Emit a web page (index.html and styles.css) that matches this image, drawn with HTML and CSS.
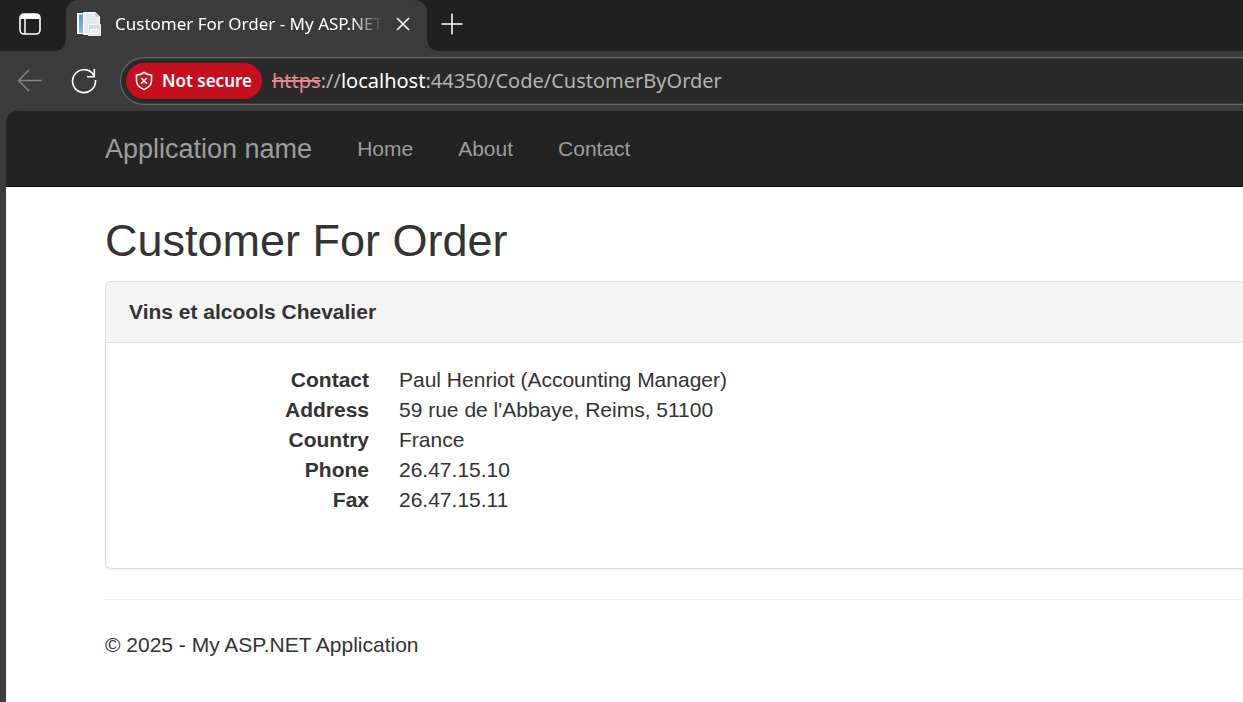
FILE: index.html
```html
<!DOCTYPE html>
<html lang="en">
<head>
<meta charset="utf-8">
<meta name="viewport" content="width=device-width, initial-scale=1">
<title>Customer For Order - My ASP.NET Application</title>
<link rel="stylesheet" href="styles.css">
</head>
<body>
<div class="browser">
  <div class="tab-strip">
    <button class="icon-button tab-actions" type="button" aria-label="Tab actions">
      <svg width="24" height="24" viewBox="0 0 24 24" fill="none" stroke="#fff" stroke-width="1.6"><rect x="2" y="2" width="20" height="20" rx="4"/><path d="M2.500 7V5a3 3 0 0 1 3-3h13a3 3 0 0 1 3 3v2z" fill="#fff" stroke="none"/><path d="M7 7v15" stroke-width="1.5"/></svg>
    </button>
    <div class="tab">
      <svg class="favicon" width="26" height="26" viewBox="0 0 26 26"><defs><linearGradient id="spine" x2="0" y2="1"><stop stop-color="#4c9bd0"/><stop offset="1" stop-color="#8fbbdc"/></linearGradient></defs><path d="M1 2h7v21H1z" fill="#f5f6f7"/><path d="M3 3.500h4v18.500H3z" fill="url(#spine)"/><path d="M7.500 1.500h12l4 4v18h-16z" fill="#e9ecef" stroke="#fff"/><path d="M19.500 1.500v4h4z" fill="#bfc4c9"/><path d="M10 5h8M10 8h11M10 11h11M10 14h2M10 17h2M10 20h2" stroke="#dde1e5"/><path d="M12.500 13.500h12v11h-12z" fill="#d3dae1" stroke="#f3f5f7"/><path d="M14.500 18.500h8v4h-8z" stroke="#fff" fill="#e4e9ee"/></svg>
      <span class="tab-title">Customer For Order - My ASP.NET</span>
      <button class="icon-button" type="button" aria-label="Close tab">
        <svg width="16" height="16" viewBox="0 0 16 16" stroke="#fff" stroke-width="1.5"><path d="M2 2l12 12M14 2L2 14"/></svg>
      </button>
    </div>
    <button class="icon-button new-tab" type="button" aria-label="New tab">
      <svg width="22" height="22" viewBox="0 0 22 22" stroke="#fff" stroke-width="1.5"><path d="M11 .5v21M.5 11h21"/></svg>
    </button>
  </div>
  <div class="toolbar">
    <button class="icon-button" type="button" aria-label="Back">
      <svg width="26" height="24" viewBox="0 0 26 24" fill="none" stroke="#858585" stroke-width="1.5"><path d="M12 1L1.500 11.500 12 22M1.500 11.500H25"/></svg>
    </button>
    <button class="icon-button reload" type="button" aria-label="Refresh">
      <svg width="26" height="26" viewBox="0 0 26 26" fill="none" stroke="#fff" stroke-width="1.6"><path d="M24.500 12A11.500 11.500 0 1 1 21.500 5.300L23.300 8.500"/><path d="M23.300 1v7.700H16"/></svg>
    </button>
    <div class="address-bar">
      <button class="security" type="button">
        <svg width="18" height="20" viewBox="0 0 18 20" fill="none" stroke="#fff" stroke-width="1.6"><path d="M9 1.500C11.500 3.300 14 4 16.500 4v5.500c0 4-2.500 7-7.500 9-5-2-7.500-5-7.500-9V4C4 4 6.500 3.300 9 1.500z"/><path d="M6.200 7l5.600 5.600M11.800 7l-5.600 5.600"/></svg>
        <span>Not secure</span>
      </button>
      <div class="url" role="textbox" aria-label="Address" tabindex="0"><s class="scheme">https</s>://<span class="host">localhost</span>:44350/Code/CustomerByOrder</div>
    </div>
  </div>
  <div class="page">
    <nav class="navbar">
      <a class="brand" href="#">Application name</a>
      <a class="nav-link" href="#">Home</a>
      <a class="nav-link" href="#">About</a>
      <a class="nav-link" href="#">Contact</a>
    </nav>
    <main class="content">
      <h1 class="heading">Customer For Order</h1>
      <section class="panel">
        <h2 class="panel-heading">Vins et alcools Chevalier</h2>
        <dl class="details">
          <dt>Contact</dt><dd>Paul Henriot (Accounting Manager)</dd>
          <dt>Address</dt><dd>59 rue de l'Abbaye, Reims, 51100</dd>
          <dt>Country</dt><dd>France</dd>
          <dt>Phone</dt><dd>26.47.15.10</dd>
          <dt>Fax</dt><dd>26.47.15.11</dd>
        </dl>
      </section>
      <footer class="footer">© 2025 - My ASP.NET Application</footer>
    </main>
  </div>
</div>
</body>
</html>
```
FILE: styles.css
```css
* {
  box-sizing: border-box;
}

body {
  margin: 0;
  color: #333;
  font: 21px/30px "Liberation Sans", Arial, sans-serif;
}

button {
  border: 0;
  font: inherit;
}

.browser {
  display: flex;
  flex-direction: column;
  min-height: 100vh;
  background: #3b3b3b;
}

.icon-button {
  display: flex;
  flex: none;
  padding: 0;
  background: none;
}

.icon-button svg,
.favicon {
  display: block;
  flex: none;
}

.tab-strip {
  display: flex;
  align-items: center;
  height: 51px;
  padding-left: 18px;
  background: #202020;
  font-family: "Noto Sans", "Open Sans", sans-serif;
}

.tab-actions {
  margin-right: 24px;
  padding-bottom: 3px;
}

.tab {
  position: relative;
  display: flex;
  align-items: center;
  width: 361px;
  height: 51px;
  padding: 0 16px 3px 10px;
  border-radius: 12px 12px 0 0;
  background: #3b3b3b;
}

/* Curved feet where the tab meets the toolbar */
.tab::before,
.tab::after {
  content: "";
  position: absolute;
  bottom: 0;
  width: 10px;
  height: 10px;
}

.tab::before {
  right: 100%;
  background: radial-gradient(circle at 0 0, transparent 9px, #3b3b3b 10px);
}

.tab::after {
  left: 100%;
  background: radial-gradient(circle at 100% 0, transparent 9px, #3b3b3b 10px);
}

.tab-title {
  flex: 1;
  min-width: 0;
  margin: 0 10px 0 13px;
  color: #fff;
  font-size: 17px;
  white-space: nowrap;
  mask-image: linear-gradient(to left, transparent 2px, #000 34px);
}

.new-tab {
  margin-left: 14px;
  padding-bottom: 4px;
}

.toolbar {
  display: flex;
  align-items: center;
  height: 60px;
  padding-left: 17px;
}

.reload {
  margin: 0 23px 0 28px;
}

.address-bar {
  display: flex;
  flex: 1;
  align-items: center;
  height: 48px;
  padding-left: 5px;
  border: 1px solid #686868;
  border-right: 0;
  border-radius: 24px 0 0 24px;
  background: #292929;
  box-shadow: inset 0 1px #3f3f3f, inset 0 -1px #3f3f3f;
  font-family: "Noto Sans", "Open Sans", sans-serif;
}

.security {
  display: flex;
  align-items: center;
  gap: 9px;
  height: 36px;
  padding: 0 10px 0 9px;
  border-radius: 18px;
  background: #c50f1f;
  color: #fff;
  font-size: 17px;
  font-weight: 600;
  white-space: nowrap;
}

.url {
  margin-left: 10px;
  color: #b4b4b4;
  font-size: 20px;
  white-space: nowrap;
}

.scheme {
  color: #e58b8e;
}

.host {
  color: #fff;
}

.page {
  flex: 1;
  margin-left: 6px;
  overflow: hidden;
  border-radius: 12px 0 0 0;
  background: linear-gradient(#222 60px, #fff 60px);
}

.navbar {
  display: flex;
  align-items: center;
  gap: 45px;
  height: 76px;
  padding-left: 99px;
  border-bottom: 1px solid #080808;
  background: #222;
}

.brand,
.nav-link {
  color: #9d9d9d;
  text-decoration: none;
  white-space: nowrap;
}

.brand {
  font-size: 27px;
}

.content {
  padding: 29px 0 40px 99px;
}

.heading {
  margin: 0 0 15px;
  font-size: 45px;
  font-weight: 400;
  line-height: 50px;
}

.panel {
  border: 1px solid #ddd;
  border-right: 0;
  border-radius: 6px 0 0 6px;
  box-shadow: 0 2px 2px rgba(0, 0, 0, 0.05);
}

.panel-heading {
  margin: 0;
  padding: 15px 23px;
  border-bottom: 1px solid #ddd;
  border-radius: 5px 0 0 0;
  background: #f4f4f4;
  font-size: 21px;
  font-weight: 700;
}

.details {
  display: grid;
  grid-template-columns: 240px 1fr;
  column-gap: 30px;
  margin: 0;
  padding: 22px 23px 53px;
}

.details dt {
  font-weight: 700;
  text-align: right;
}

.details dd {
  margin: 0;
}

.footer {
  margin-top: 30px;
  padding-top: 30px;
  border-top: 1px solid #eee;
}
```
